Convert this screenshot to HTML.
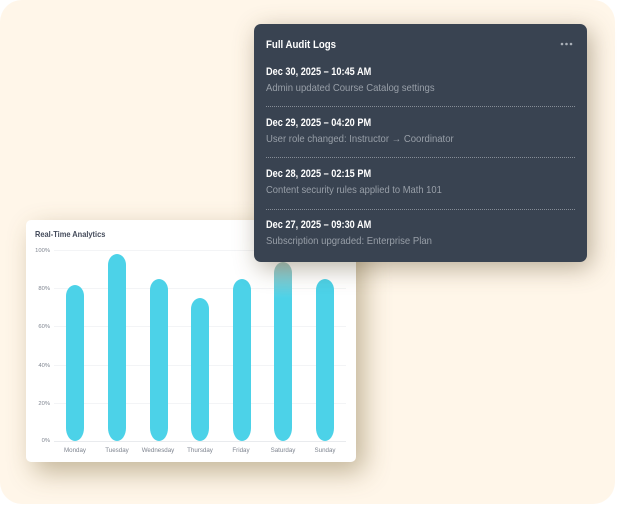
<!DOCTYPE html>
<html>
<head>
<meta charset="utf-8">
<style>
html,body{margin:0;padding:0;background:#fff;}
body{width:617px;height:505px;overflow:hidden;position:relative;font-family:"Liberation Sans",sans-serif;}
.bg{position:absolute;left:0;top:0;width:615px;height:504px;background:#fff6e9;border-radius:22px;}
.card{position:absolute;left:26px;top:220px;width:330px;height:242px;background:#fff;border-radius:5px;box-shadow:8px 10px 26px rgba(110,90,40,.42);}
.dark{position:absolute;left:254px;top:24px;width:333px;height:238px;background:#394351;border-radius:7px;box-shadow:4px 6px 24px rgba(90,75,40,.42);}
.t{position:absolute;white-space:nowrap;transform-origin:0 50%;}
.h{left:12px;color:#fff;font-size:10.8px;font-weight:bold;transform:scaleX(.85);}
.s{left:12px;color:#989fa8;font-size:10.1px;transform:scaleX(.945);}
.hr{position:absolute;left:12px;width:309px;height:1px;background:repeating-linear-gradient(90deg,#868d97 0 1px,transparent 1px 2px);}
.grid{position:absolute;left:54px;width:292px;height:1px;background:#f3f4f6;}
.y{position:absolute;width:24px;left:26px;text-align:right;font-size:5.8px;color:#7f8590;}
.x{position:absolute;top:447px;width:42px;text-align:center;font-size:6.2px;color:#7f8590;}
.bar{position:absolute;width:18px;background:#4cd2e8;border-radius:9px 9px 9px 9px / 11px 11px 13px 13px;}
</style>
</head>
<body>
<div class="bg"></div>
<div class="card"></div>
<div class="t" style="left:35px;top:230px;font-size:8.2px;font-weight:bold;color:#454c5c;transform:scaleX(.91);">Real-Time Analytics</div>

<div class="grid" style="top:250px"></div>
<div class="grid" style="top:288px"></div>
<div class="grid" style="top:326px"></div>
<div class="grid" style="top:365px"></div>
<div class="grid" style="top:403px"></div>
<div class="grid" style="top:441px;background:#e9ebee"></div>

<div class="y" style="top:248px">100%</div>
<div class="y" style="top:286px">80%</div>
<div class="y" style="top:324px">60%</div>
<div class="y" style="top:363px">40%</div>
<div class="y" style="top:401px">20%</div>
<div class="y" style="top:438px">0%</div>

<div class="bar" style="left:66px;top:285px;height:156px"></div>
<div class="bar" style="left:108px;top:254px;height:187px"></div>
<div class="bar" style="left:150px;top:279px;height:162px"></div>
<div class="bar" style="left:191px;top:298px;height:143px"></div>
<div class="bar" style="left:233px;top:279px;height:162px"></div>
<div class="bar" style="left:274px;top:262px;height:179px;background:linear-gradient(#a9c9c4 0,#4cd2e8 36px)"></div>
<div class="bar" style="left:316px;top:279px;height:162px"></div>

<div class="x" style="left:54px">Monday</div>
<div class="x" style="left:96px">Tuesday</div>
<div class="x" style="left:137px">Wednesday</div>
<div class="x" style="left:179px">Thursday</div>
<div class="x" style="left:220px">Friday</div>
<div class="x" style="left:262px">Saturday</div>
<div class="x" style="left:304px">Sunday</div>

<div class="dark">
  <div class="t" style="left:12px;top:15px;color:#fff;font-size:11.2px;font-weight:bold;transform:scaleX(.865);">Full Audit Logs</div>
  <svg style="position:absolute;left:306px;top:18px" width="14" height="4"><circle cx="2" cy="2" r="1.3" fill="#aab0b8"/><circle cx="6.5" cy="2" r="1.3" fill="#aab0b8"/><circle cx="11" cy="2" r="1.3" fill="#aab0b8"/></svg>

  <div class="t h" style="top:42px">Dec 30, 2025 – 10:45 AM</div>
  <div class="t s" style="top:59px">Admin updated Course Catalog settings</div>
  <div class="hr" style="top:82px"></div>

  <div class="t h" style="top:93px">Dec 29, 2025 – 04:20 PM</div>
  <div class="t s" style="top:110px">User role changed: Instructor → Coordinator</div>
  <div class="hr" style="top:133px"></div>

  <div class="t h" style="top:144px">Dec 28, 2025 – 02:15 PM</div>
  <div class="t s" style="top:161px;transform:scaleX(.93)">Content security rules applied to Math 101</div>
  <div class="hr" style="top:185px"></div>

  <div class="t h" style="top:195px">Dec 27, 2025 – 09:30 AM</div>
  <div class="t s" style="top:212px">Subscription upgraded: Enterprise Plan</div>
</div>
</body>
</html>
